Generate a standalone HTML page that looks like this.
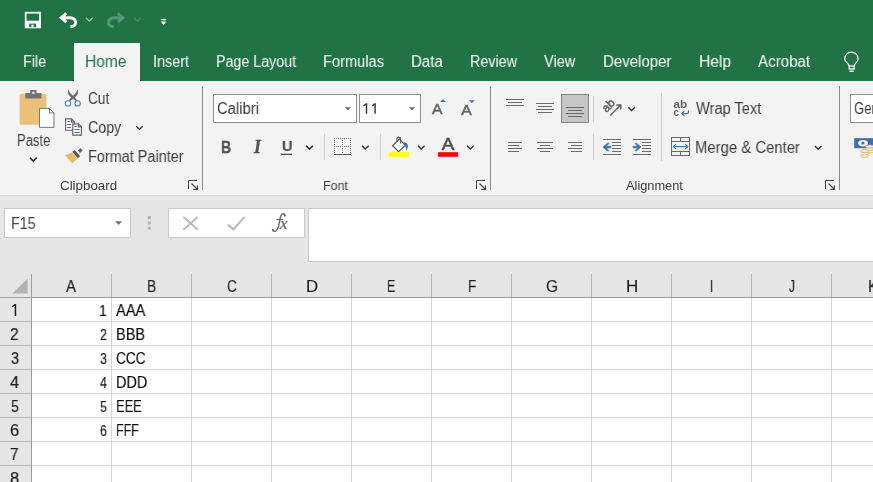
<!DOCTYPE html>
<html><head><meta charset="utf-8"><title>Excel</title>
<style>
html,body{margin:0;padding:0;}
body{width:873px;height:482px;overflow:hidden;position:relative;background:#e6e6e6;font-family:"Liberation Sans",sans-serif;}
.t{position:absolute;white-space:nowrap;transform-origin:0 50%;will-change:transform;font-family:"Liberation Sans",sans-serif;}
.b{position:absolute;}
svg{position:absolute;overflow:visible;}
</style></head><body>
<div class="b" style="left:0px;top:0px;width:873px;height:81px;background:#217346;"></div>
<div class="b" style="left:74px;top:43px;width:66px;height:38px;background:#f3f3f3;"></div>
<div class="b" style="left:0px;top:81px;width:873px;height:114px;background:#f3f3f3;"></div>
<div class="b" style="left:0px;top:195px;width:873px;height:1px;background:#dbdbdb;"></div>
<div class="b" style="left:202px;top:86px;width:1px;height:104px;background:#8a8a8a;"></div>
<div class="b" style="left:490px;top:86px;width:1px;height:104px;background:#8a8a8a;"></div>
<div class="b" style="left:839px;top:86px;width:1px;height:104px;background:#8a8a8a;"></div>
<div class="b" style="left:324px;top:134px;width:1px;height:26px;background:#d0d0d0;"></div>
<div class="b" style="left:380px;top:134px;width:1px;height:26px;background:#d0d0d0;"></div>
<div class="b" style="left:593px;top:96px;width:1px;height:26px;background:#d0d0d0;"></div>
<div class="b" style="left:593px;top:134px;width:1px;height:26px;background:#d0d0d0;"></div>
<div class="b" style="left:661px;top:93px;width:1px;height:68px;background:#d0d0d0;"></div>
<div class="b" style="left:213px;top:94px;width:144px;height:29px;background:#fff;box-sizing:border-box;border:1px solid #8f8f8f;"></div>
<div class="b" style="left:359px;top:94px;width:62px;height:29px;background:#fff;box-sizing:border-box;border:1px solid #8f8f8f;"></div>
<div class="b" style="left:850px;top:94px;width:40px;height:29px;background:#fff;box-sizing:border-box;border:1px solid #8f8f8f;"></div>
<div class="b" style="left:561px;top:94px;width:28px;height:29px;background:#c6c6c6;box-sizing:border-box;border:1px solid #858585;"></div>
<div class="b" style="left:4px;top:208px;width:127px;height:30px;background:#fff;box-sizing:border-box;border:1px solid #c8c8c8;"></div>
<div class="b" style="left:168px;top:208px;width:137px;height:30px;background:#fff;box-sizing:border-box;border:1px solid #c8c8c8;"></div>
<div class="b" style="left:308px;top:208px;width:570px;height:54px;background:#fff;box-sizing:border-box;border:1px solid #c8c8c8;"></div>
<div class="b" style="left:32px;top:298px;width:841px;height:184px;background:#fff;"></div>
<div class="b" style="left:111px;top:298px;width:1px;height:184px;background:#d4d4d4;"></div>
<div class="b" style="left:191px;top:298px;width:1px;height:184px;background:#d4d4d4;"></div>
<div class="b" style="left:271px;top:298px;width:1px;height:184px;background:#d4d4d4;"></div>
<div class="b" style="left:351px;top:298px;width:1px;height:184px;background:#d4d4d4;"></div>
<div class="b" style="left:431px;top:298px;width:1px;height:184px;background:#d4d4d4;"></div>
<div class="b" style="left:511px;top:298px;width:1px;height:184px;background:#d4d4d4;"></div>
<div class="b" style="left:591px;top:298px;width:1px;height:184px;background:#d4d4d4;"></div>
<div class="b" style="left:671px;top:298px;width:1px;height:184px;background:#d4d4d4;"></div>
<div class="b" style="left:751px;top:298px;width:1px;height:184px;background:#d4d4d4;"></div>
<div class="b" style="left:831px;top:298px;width:1px;height:184px;background:#d4d4d4;"></div>
<div class="b" style="left:32px;top:321px;width:841px;height:1px;background:#d4d4d4;"></div>
<div class="b" style="left:32px;top:345px;width:841px;height:1px;background:#d4d4d4;"></div>
<div class="b" style="left:32px;top:369px;width:841px;height:1px;background:#d4d4d4;"></div>
<div class="b" style="left:32px;top:393px;width:841px;height:1px;background:#d4d4d4;"></div>
<div class="b" style="left:32px;top:417px;width:841px;height:1px;background:#d4d4d4;"></div>
<div class="b" style="left:32px;top:441px;width:841px;height:1px;background:#d4d4d4;"></div>
<div class="b" style="left:32px;top:465px;width:841px;height:1px;background:#d4d4d4;"></div>
<div class="b" style="left:0px;top:297px;width:873px;height:1px;background:#9c9c9c;"></div>
<div class="b" style="left:31px;top:274px;width:1px;height:208px;background:#9c9c9c;"></div>
<div class="b" style="left:111px;top:274px;width:1px;height:23px;background:#b5b5b5;"></div>
<div class="b" style="left:191px;top:274px;width:1px;height:23px;background:#b5b5b5;"></div>
<div class="b" style="left:271px;top:274px;width:1px;height:23px;background:#b5b5b5;"></div>
<div class="b" style="left:351px;top:274px;width:1px;height:23px;background:#b5b5b5;"></div>
<div class="b" style="left:431px;top:274px;width:1px;height:23px;background:#b5b5b5;"></div>
<div class="b" style="left:511px;top:274px;width:1px;height:23px;background:#b5b5b5;"></div>
<div class="b" style="left:591px;top:274px;width:1px;height:23px;background:#b5b5b5;"></div>
<div class="b" style="left:671px;top:274px;width:1px;height:23px;background:#b5b5b5;"></div>
<div class="b" style="left:751px;top:274px;width:1px;height:23px;background:#b5b5b5;"></div>
<div class="b" style="left:831px;top:274px;width:1px;height:23px;background:#b5b5b5;"></div>
<div class="b" style="left:0px;top:321px;width:31px;height:1px;background:#bababa;"></div>
<div class="b" style="left:0px;top:345px;width:31px;height:1px;background:#bababa;"></div>
<div class="b" style="left:0px;top:369px;width:31px;height:1px;background:#bababa;"></div>
<div class="b" style="left:0px;top:393px;width:31px;height:1px;background:#bababa;"></div>
<div class="b" style="left:0px;top:417px;width:31px;height:1px;background:#bababa;"></div>
<div class="b" style="left:0px;top:441px;width:31px;height:1px;background:#bababa;"></div>
<div class="b" style="left:0px;top:465px;width:31px;height:1px;background:#bababa;"></div>
<svg width="873" height="482" viewBox="0 0 873 482" style="left:0;top:0;will-change:transform">
<!-- QAT: save -->
<g id="save">
<rect x="25.7" y="12.7" width="14.3" height="14.6" fill="none" stroke="#fff" stroke-width="1.8"/>
<rect x="25" y="20.7" width="15.8" height="7.4" fill="#fff"/>
<rect x="29.2" y="23.6" width="6.9" height="3.6" fill="#217346"/>
<rect x="31.4" y="24.6" width="2.2" height="2.6" fill="#fff"/>
</g>
<!-- undo -->
<g id="undo" fill="none" stroke="#fff" stroke-width="2.9" stroke-linejoin="miter">
<path d="M66.4 13.4 L61.2 17.8 L66.4 22.2" />
<path d="M62 17.8 H69.8 C77.6 17.8 77.4 26.6 70.4 26.8"/>
</g>
<path d="M86 17.9 L89.3 21.2 L92.6 17.9" fill="none" stroke="#a9cdb9" stroke-width="1.2"/>
<!-- redo (disabled) -->
<g id="redo" fill="none" stroke="#4f9a73" stroke-width="2.9">
<path d="M117.8 13.4 L123 17.8 L117.8 22.2"/>
<path d="M122.2 17.8 H114.4 C106.6 17.8 106.8 26.6 113.8 26.8"/>
</g>
<path d="M134.1 17.9 L137.4 21.2 L140.7 17.9" fill="none" stroke="#4c9470" stroke-width="1.2"/>
<!-- customize -->
<rect x="161" y="18.9" width="5.2" height="1.3" fill="#fff"/>
<path d="M160.8 21.5 H166.4 L163.6 25 Z" fill="#fff"/>
<!-- lightbulb -->
<g fill="none" stroke="#fff" stroke-width="1.3">
<path d="M849.2 66 C849.2 63.2 844.7 62.4 844.7 58.9 A6.7 6.7 0 1 1 858.1 58.9 C858.1 62.4 854.2 63.2 854.2 66"/>
<rect x="849.2" y="66" width="5" height="3" />
<path d="M849.5 71.2 H853.7"/>
</g>

<!-- Paste -->
<g id="paste">
<rect x="19.7" y="93.7" width="26.7" height="31" rx="1.5" fill="#e9c17a"/>
<path d="M30.2 90 H36.5 V93 H41.4 V98.6 H25.3 V93 H30.2 Z" fill="#737373"/>
<rect x="32.3" y="91.7" width="2.2" height="2.2" fill="#e6e6e6"/>
<path d="M39.5 108.4 H49.5 L54 112.9 V127.4 H39.5 Z" fill="#fff" stroke="#777" stroke-width="1"/>
<path d="M49.5 108.4 V112.9 H54" fill="none" stroke="#777" stroke-width="1"/>
</g>
<path d="M29.9 157.6 L33.3 161 L36.7 157.6" fill="none" stroke="#2b2b2b" stroke-width="1.6"/>

<!-- scissors -->
<g id="cut">
<path d="M67.8 88.9 L70.1 92.7 Q71.7 94.9 74 96.4 L77.1 100.3 L76.2 101.3 L72 98.3 Q69.2 96 68.3 94 Z" fill="#6a6a6a"/>
<path d="M78.2 88.9 L75.9 92.7 Q74.3 94.9 72 96.4 L68.9 100.3 L69.8 101.3 L74 98.3 Q76.8 96 77.7 94 Z" fill="#6a6a6a"/>
<circle cx="68" cy="103.4" r="2.65" fill="#f8fbff" stroke="#4a80c4" stroke-width="1.05"/>
<circle cx="77.6" cy="103.4" r="2.65" fill="#f8fbff" stroke="#4a80c4" stroke-width="1.05"/>
</g>

<!-- copy -->
<g id="copy" fill="#fdfdfd" stroke="#616161" stroke-width="1.15">
<path d="M65.6 118.9 H71.4 L74.4 121.9 V130.2 H65.6 Z"/>
<path d="M71.4 118.9 V121.9 H74.4" fill="none"/>
<path d="M72.8 123.8 H78.4 L81.4 126.8 V135.1 H72.8 Z"/>
<path d="M78.4 123.8 V126.8 H81.4" fill="none"/>
<g stroke="#46688c" stroke-width="1">
<path d="M67.2 121.5 H69.9 M67.2 124.5 H70.9 M67.2 127.5 H70.9"/>
<path d="M74.4 126.5 H76.8 M74.4 129.5 H79.7 M74.4 132.5 H79.7"/>
</g>
</g>
<path d="M136.3 126.3 L139.5 129.4 L142.7 126.3" fill="none" stroke="#333" stroke-width="1.4"/>

<!-- format painter -->
<g id="fp">
<path d="M65.2 155.2 L72.2 152.6 L77.6 158.6 L72.2 163.5 Z" fill="#eabc68"/>
<path d="M72.2 151.8 L74.8 150.1 L80.1 156.2 L77.9 158.2 Z" fill="#595959"/>
<path d="M77.9 150.6 L80.5 148.2 L82.6 150.4 L80 153 Z" fill="#595959"/>
</g>

<!-- dropdown arrows in combo -->
<path d="M344.8 107.2 H351 L347.9 110.3 Z" fill="#666"/>
<path d="M408.8 107.2 H415.2 L412 110.3 Z" fill="#666"/>

<!-- custom digit 1 glyphs (no foot) -->
<path d="M363.3 105.3 L365.9 103.2 H367.2 V113.8 H365.8 V104.9 L363.8 106.4 Z" fill="#333"/>
<path d="M371.8 105.3 L374.4 103.2 H375.8 V113.8 H374.4 V104.9 L372.3 106.4 Z" fill="#333"/>
<!-- grow/shrink font -->
<text x="432" y="114.1" font-family="Liberation Sans" font-size="14.6" fill="#666" stroke="#666" stroke-width="0.5" textLength="10.4" lengthAdjust="spacingAndGlyphs">A</text>
<path d="M440 102 L443 99.2 L446 102 Z" fill="#4074ae"/>
<text x="461.3" y="114.8" font-family="Liberation Sans" font-size="13.8" fill="#666" stroke="#666" stroke-width="0.5" textLength="10.4" lengthAdjust="spacingAndGlyphs">A</text>
<path d="M468.9 100.2 H474.9 L471.9 103 Z" fill="#4074ae"/>

<!-- U underline -->
<rect x="281" y="153.7" width="11.1" height="1.3" fill="#505050"/>
<path d="M306.1 145.8 L309.45 149.2 L312.8 145.8" fill="none" stroke="#2b2b2b" stroke-width="1.6"/>

<!-- borders -->
<rect x="334" y="138" width="17" height="16" fill="#fdfdfd"/>
<path d="M334 138h1v1h-1zM334 140h1v1h-1zM334 142h1v1h-1zM334 144h1v1h-1zM334 146h1v1h-1zM334 148h1v1h-1zM334 150h1v1h-1zM334 152h1v1h-1zM336 138h1v1h-1zM336 146h1v1h-1zM338 138h1v1h-1zM338 146h1v1h-1zM340 138h1v1h-1zM340 146h1v1h-1zM342 138h1v1h-1zM342 140h1v1h-1zM342 142h1v1h-1zM342 144h1v1h-1zM342 146h1v1h-1zM342 148h1v1h-1zM342 150h1v1h-1zM342 152h1v1h-1zM344 138h1v1h-1zM344 146h1v1h-1zM346 138h1v1h-1zM346 146h1v1h-1zM348 138h1v1h-1zM348 146h1v1h-1zM350 138h1v1h-1zM350 140h1v1h-1zM350 142h1v1h-1zM350 144h1v1h-1zM350 146h1v1h-1zM350 148h1v1h-1zM350 150h1v1h-1zM350 152h1v1h-1z" fill="#6b6b6b"/>
<rect x="334" y="154" width="17" height="1" fill="#5a5a5a"/>
<path d="M362 145.7 L365.3 149 L368.6 145.7" fill="none" stroke="#333" stroke-width="1.4"/>

<!-- fill bucket -->
<g id="bucket">
<path d="M392.6 145.8 L399.4 139.2 L405.2 145.4 L398.6 151.6 Z" fill="#fdfdfd" stroke="#5a5a5a" stroke-width="1.2"/>
<path d="M396.8 141.4 V139 A1.9 1.9 0 0 1 400.6 139 V143.4" fill="none" stroke="#5a5a5a" stroke-width="1.1"/>
<path d="M403.6 142.2 C406.6 142.2 408.2 144.4 407.9 146.6 C407.7 148.4 407 149.8 406.2 151 C406.4 148.6 406 146.6 404.4 145.2 Z" fill="#3d6fa8"/>
</g>
<rect x="388.7" y="152.2" width="20.4" height="4.6" fill="#ffff00"/>
<path d="M417.9 145.7 L421.2 149 L424.5 145.7" fill="none" stroke="#333" stroke-width="1.4"/>

<!-- font color -->
<text x="441.7" y="150" font-family="Liberation Sans" font-size="16.8" fill="#4d4d4d" stroke="#4d4d4d" stroke-width="0.6" textLength="12.5" lengthAdjust="spacingAndGlyphs">A</text>
<rect x="438" y="152.2" width="20" height="4.6" fill="#ff0000"/>
<path d="M467 145.7 L470.3 149 L473.6 145.7" fill="none" stroke="#333" stroke-width="1.4"/>

<!-- dialog launchers -->
<g id="dl1" fill="none" stroke="#444" stroke-width="1">
<path d="M188.5 189 V180.5 H197"/>
<path d="M191.5 183.5 L197.2 189.2" stroke-width="1.2"/>
<path d="M193.4 189.4 H197.4 V185.4" stroke-width="1.2"/>
</g>
<g fill="none" stroke="#444" stroke-width="1" transform="translate(288 0)">
<path d="M188.5 189 V180.5 H197"/>
<path d="M191.5 183.5 L197.2 189.2" stroke-width="1.2"/>
<path d="M193.4 189.4 H197.4 V185.4" stroke-width="1.2"/>
</g>
<g fill="none" stroke="#444" stroke-width="1" transform="translate(637 0)">
<path d="M188.5 189 V180.5 H197"/>
<path d="M191.5 183.5 L197.2 189.2" stroke-width="1.2"/>
<path d="M193.4 189.4 H197.4 V185.4" stroke-width="1.2"/>
</g>

<!-- alignment lines -->
<g fill="#6a6a6a">
<rect x="506" y="99" width="18" height="1"/><rect x="508" y="102" width="14" height="1"/><rect x="506" y="105" width="18" height="1"/>
<rect x="536" y="103" width="18" height="1"/><rect x="538" y="106" width="14" height="1"/><rect x="536" y="109" width="18" height="1"/><rect x="538" y="112" width="14" height="1"/>
<rect x="566" y="107" width="18" height="1"/><rect x="568" y="110" width="14" height="1"/><rect x="566" y="113" width="18" height="1"/><rect x="568" y="116" width="14" height="1"/>
<rect x="508" y="142" width="14" height="1"/><rect x="508" y="145" width="11" height="1"/><rect x="508" y="148" width="14" height="1"/><rect x="508" y="151" width="11" height="1"/>
<rect x="537" y="142" width="16" height="1"/><rect x="540" y="145" width="10" height="1"/><rect x="537" y="148" width="16" height="1"/><rect x="540" y="151" width="10" height="1"/>
<rect x="568" y="142" width="14" height="1"/><rect x="571" y="145" width="11" height="1"/><rect x="568" y="148" width="14" height="1"/><rect x="571" y="151" width="11" height="1"/>
</g>

<!-- orientation -->
<g id="orient">
<text transform="translate(606.4 112.9) rotate(-45)" font-family="Liberation Sans" font-size="12" fill="#5e5e5e" stroke="#5e5e5e" stroke-width="0.45">ab</text>
<path d="M610.2 115.4 L620.5 105.2" stroke="#5e5e5e" stroke-width="1.4" fill="none"/>
<path d="M616.4 105 H620.8 V109.6" stroke="#5e5e5e" stroke-width="1.4" fill="none"/>
</g>
<path d="M628.3 107.2 L631.6 110.4 L634.9 107.2" fill="none" stroke="#333" stroke-width="1.4"/>

<!-- wrap text icon -->
<g id="wrap">
<text x="673.6" y="107.8" font-family="Liberation Sans" font-weight="bold" font-size="11" fill="#5f5f5f" textLength="13.6" lengthAdjust="spacingAndGlyphs">ab</text>
<text x="673.6" y="116.2" font-family="Liberation Sans" font-weight="bold" font-size="11" fill="#5f5f5f" textLength="5.4" lengthAdjust="spacingAndGlyphs">c</text>
<path d="M688.4 110.2 V112 C688.4 113.4 687.6 113.6 686.6 113.6 H682" fill="none" stroke="#4074ae" stroke-width="1.2"/>
<path d="M684.4 111.2 L681.8 113.6 L684.4 116" fill="none" stroke="#4074ae" stroke-width="1.2"/>
</g>

<!-- indent icons -->
<g fill="#6a6a6a">
<rect x="603" y="139" width="18" height="1"/><rect x="612" y="142" width="9" height="1"/><rect x="612" y="145" width="9" height="1"/><rect x="612" y="148" width="9" height="1"/><rect x="612" y="151" width="9" height="1"/><rect x="603" y="154" width="18" height="1"/>
<rect x="633" y="139" width="18" height="1"/><rect x="642" y="142" width="9" height="1"/><rect x="642" y="145" width="9" height="1"/><rect x="642" y="148" width="9" height="1"/><rect x="642" y="151" width="9" height="1"/><rect x="633" y="154" width="18" height="1"/>
</g>
<path d="M603 147 L607.4 143.2 H609.2 L606.4 146.2 H611 V147.9 H606.4 L609.2 150.9 H607.4 Z" fill="#4074ae" stroke="#4074ae" stroke-width="0.6"/>
<path d="M641 147 L636.6 143.2 H634.8 L637.6 146.2 H633 V147.9 H637.6 L634.8 150.9 H636.6 Z" fill="#4074ae" stroke="#4074ae" stroke-width="0.6"/>

<!-- merge icon -->
<g fill="none" stroke="#6a6a6a" stroke-width="1">
<rect x="671.5" y="137.5" width="18" height="18"/>
<path d="M671.5 141.5 H689.5 M671.5 151.5 H689.5 M680.5 137.5 V141.5 M680.5 151.5 V155.5"/>
</g>
<g fill="none" stroke="#4074ae" stroke-width="1.1">
<path d="M673.6 146.6 H687.6"/>
<path d="M676 144.2 L673.4 146.6 L676 149"/>
<path d="M685.2 144.2 L687.8 146.6 L685.2 149"/>
</g>
<path d="M814.9 146 L818.2 149.2 L821.5 146" fill="none" stroke="#333" stroke-width="1.4"/>

<!-- currency icon -->
<g id="curr">
<rect x="854.2" y="138.2" width="22" height="10" fill="#3b6fb0"/>
<ellipse cx="863" cy="143.2" rx="5" ry="3.3" fill="#f3f3f3"/>
<circle cx="863" cy="143.2" r="1.4" fill="#3b6fb0"/>
<g fill="#f3f3f3" stroke="#e3b05e" stroke-width="0.9">
<ellipse cx="869.6" cy="151.4" rx="4" ry="1.5"/>
<ellipse cx="869.6" cy="149" rx="4" ry="1.5"/>
<ellipse cx="869.6" cy="146.6" rx="4" ry="1.5"/>
<ellipse cx="864.6" cy="155.8" rx="4" ry="1.5"/>
<ellipse cx="864.6" cy="153.4" rx="4" ry="1.5"/>
<ellipse cx="864.6" cy="151" rx="4" ry="1.5"/>
</g>
</g>

<!-- name box arrow -->
<path d="M115 221.3 H122.2 L118.6 224.9 Z" fill="#777"/>
<!-- dots -->
<g fill="#b3b3b3">
<rect x="147.8" y="216" width="3" height="3"/><rect x="147.8" y="221.4" width="3" height="3"/><rect x="147.8" y="226.6" width="3" height="3"/>
</g>
<!-- X -->
<path d="M183.4 217 L197.8 229.8 M197.8 217 L183.4 229.8" stroke="#bababa" stroke-width="1.9" fill="none"/>
<!-- check -->
<path d="M228 224.6 L233.4 229.4 L244.4 217" stroke="#bdbdbd" stroke-width="2.2" fill="none"/>
<!-- fx -->
<g id="fx" fill="#6a6a6a" stroke="#6a6a6a" stroke-width="0.25">
<path d="M284.9 215.6 C284.7 213.5 282.3 213 281.2 215 C280.2 217 279.7 221 278.7 225.4 C277.9 229 276.8 231.4 274.8 231.2 C273.6 231.1 272.8 230.5 272.7 229.8" fill="none" stroke-width="1.5" stroke-linecap="round"/>
<circle cx="284.6" cy="215.5" r="0.9"/><circle cx="272.9" cy="230" r="0.9"/>
<path d="M276.4 219.5 H283.2" fill="none" stroke-width="1.2"/>
<text transform="translate(279.7 228.9) scale(1.12 1)" style="font-family:'Liberation Serif',serif;font-style:italic;font-size:16px">x</text>
</g>

<!-- row header 1 (no foot) -->
<path d="M11.7 306.3 L14.8 304 H16.2 V316 H14.7 V305.8 L12.3 307.5 Z" fill="#1e1e1e"/>
<!-- corner triangle -->
<path d="M27.7 278.4 V293.6 H12.2 Z" fill="#b4b4b4"/>
</svg>

<span class="t" style="left:22.50px;top:51px;font-size:16px;line-height:21px;color:#ffffff;transform-origin:0 16px;transform:scale(0.8962,1);">File</span>
<span class="t" style="left:153.40px;top:51px;font-size:16px;line-height:21px;color:#ffffff;transform-origin:0 16px;transform:scale(0.9022,1);">Insert</span>
<span class="t" style="left:216.31px;top:51px;font-size:16px;line-height:21px;color:#ffffff;transform-origin:0 16px;transform:scale(0.8914,1);">Page Layout</span>
<span class="t" style="left:323.18px;top:51px;font-size:16px;line-height:21px;color:#ffffff;transform-origin:0 16px;transform:scale(0.9150,1);">Formulas</span>
<span class="t" style="left:410.76px;top:51px;font-size:16px;line-height:21px;color:#ffffff;transform-origin:0 16px;transform:scale(0.9393,1);">Data</span>
<span class="t" style="left:469.91px;top:51px;font-size:16px;line-height:21px;color:#ffffff;transform-origin:0 16px;transform:scale(0.8939,1);">Review</span>
<span class="t" style="left:544.30px;top:51px;font-size:16px;line-height:21px;color:#ffffff;transform-origin:0 16px;transform:scale(0.9100,1);">View</span>
<span class="t" style="left:602.96px;top:51px;font-size:16px;line-height:21px;color:#ffffff;transform-origin:0 16px;transform:scale(0.9380,1);">Developer</span>
<span class="t" style="left:698.53px;top:51px;font-size:16px;line-height:21px;color:#ffffff;transform-origin:0 16px;transform:scale(0.9748,1);">Help</span>
<span class="t" style="left:758.20px;top:51px;font-size:16px;line-height:21px;color:#ffffff;transform-origin:0 16px;transform:scale(0.9444,1);">Acrobat</span>
<span class="t" style="left:85.33px;top:51px;font-size:16px;line-height:21px;color:#217346;transform-origin:0 16px;transform:scale(0.9693,1);">Home</span>
<span class="t" style="left:88.30px;top:88px;font-size:16px;line-height:21px;color:#3d3d3d;transform-origin:0 16px;transform:scale(0.8525,1);">Cut</span>
<span class="t" style="left:88.30px;top:117px;font-size:16px;line-height:21px;color:#3d3d3d;transform-origin:0 16px;transform:scale(0.8889,1);">Copy</span>
<span class="t" style="left:87.80px;top:146px;font-size:16px;line-height:21px;color:#3d3d3d;transform-origin:0 16px;transform:scale(0.9035,1);">Format Painter</span>
<span class="t" style="left:16.99px;top:130px;font-size:16px;line-height:21px;color:#3d3d3d;transform-origin:0 16px;transform:scale(0.8147,1);">Paste</span>
<span class="t" style="left:60.45px;top:177px;font-size:12.8px;line-height:17px;color:#3d3d3d;transform-origin:0 13px;transform:scale(1.0419,1);">Clipboard</span>
<span class="t" style="left:322.53px;top:177px;font-size:12.8px;line-height:17px;color:#3d3d3d;transform-origin:0 13px;transform:scale(0.9740,1);">Font</span>
<span class="t" style="left:625.70px;top:177px;font-size:12.8px;line-height:17px;color:#3d3d3d;transform-origin:0 13px;transform:scale(0.9991,1);">Alignment</span>
<span class="t" style="left:216.60px;top:98px;font-size:16px;line-height:21px;color:#333;transform-origin:0 16px;transform:scale(0.9266,1);">Calibri</span>
<span class="t" style="left:695.60px;top:98px;font-size:16px;line-height:21px;color:#3d3d3d;transform-origin:0 16px;transform:scale(0.9145,1);">Wrap Text</span>
<span class="t" style="left:694.97px;top:137px;font-size:16px;line-height:21px;color:#3d3d3d;transform-origin:0 16px;transform:scale(0.9298,1);">Merge &amp; Center</span>
<span class="t" style="left:853.70px;top:98px;font-size:16px;line-height:21px;color:#333;transform-origin:0 16px;transform:scale(0.8200,1);">Ger</span>
<span class="t" style="left:11.09px;top:214px;font-size:15.6px;line-height:20px;color:#444;transform-origin:0 15px;transform:scale(0.9123,1);">F15</span>
<span class="t" style="left:220.97px;top:137px;font-size:17px;line-height:22px;color:#505050;transform-origin:0 16px;transform:scale(0.8273,1);font-weight:bold;-webkit-text-stroke:0.35px #505050;">B</span>
<span class="t" style="left:253.98px;top:136px;font-size:18px;line-height:23px;color:#505050;transform-origin:0 17px;transform:scale(0.9778,1);font-style:italic;font-family:'Liberation Serif',serif;font-weight:bold;-webkit-text-stroke:0.3px #505050;">I</span>
<span class="t" style="left:281.70px;top:136px;font-size:15px;line-height:20px;color:#505050;transform-origin:0 15px;transform:scale(0.9700,1);font-weight:bold;-webkit-text-stroke:0.2px #505050;">U</span>
<span class="t" style="left:66.20px;top:276px;font-size:16.8px;line-height:22px;color:#1e1e1e;transform-origin:0 16px;transform:scale(0.8833,1);-webkit-text-stroke:0.2px #1e1e1e;">A</span>
<span class="t" style="left:147.48px;top:276px;font-size:16.8px;line-height:22px;color:#1e1e1e;transform-origin:0 16px;transform:scale(0.8200,1);-webkit-text-stroke:0.2px #1e1e1e;">B</span>
<span class="t" style="left:226.70px;top:276px;font-size:16.8px;line-height:22px;color:#1e1e1e;transform-origin:0 16px;transform:scale(0.8083,1);-webkit-text-stroke:0.2px #1e1e1e;">C</span>
<span class="t" style="left:305.84px;top:276px;font-size:16.8px;line-height:22px;color:#1e1e1e;transform-origin:0 16px;transform:scale(0.9636,1);-webkit-text-stroke:0.2px #1e1e1e;">D</span>
<span class="t" style="left:387.46px;top:276px;font-size:16.8px;line-height:22px;color:#1e1e1e;transform-origin:0 16px;transform:scale(0.7400,1);-webkit-text-stroke:0.2px #1e1e1e;">E</span>
<span class="t" style="left:467.89px;top:276px;font-size:16.8px;line-height:22px;color:#1e1e1e;transform-origin:0 16px;transform:scale(0.8111,1);-webkit-text-stroke:0.2px #1e1e1e;">F</span>
<span class="t" style="left:546.40px;top:276px;font-size:16.8px;line-height:22px;color:#1e1e1e;transform-origin:0 16px;transform:scale(0.9250,1);-webkit-text-stroke:0.2px #1e1e1e;">G</span>
<span class="t" style="left:625.79px;top:276px;font-size:16.8px;line-height:22px;color:#1e1e1e;transform-origin:0 16px;transform:scale(1.0100,1);-webkit-text-stroke:0.2px #1e1e1e;">H</span>
<span class="t" style="left:709.93px;top:276px;font-size:16.8px;line-height:22px;color:#1e1e1e;transform-origin:0 16px;transform:scale(0.6667,1);-webkit-text-stroke:0.2px #1e1e1e;">I</span>
<span class="t" style="left:788.70px;top:276px;font-size:16.8px;line-height:22px;color:#1e1e1e;transform-origin:0 16px;transform:scale(0.7125,1);-webkit-text-stroke:0.2px #1e1e1e;">J</span>
<span class="t" style="left:867.90px;top:276px;font-size:16.8px;line-height:22px;color:#1e1e1e;transform-origin:0 16px;transform:scale(0.9000,1);-webkit-text-stroke:0.2px #1e1e1e;">K</span>
<span class="t" style="left:10.40px;top:324px;font-size:16.8px;line-height:22px;color:#1e1e1e;transform-origin:0 16px;transform:scale(0.9222,1);-webkit-text-stroke:0.2px #1e1e1e;">2</span>
<span class="t" style="left:10.70px;top:348px;font-size:16.8px;line-height:22px;color:#1e1e1e;transform-origin:0 16px;transform:scale(0.8556,1);-webkit-text-stroke:0.2px #1e1e1e;">3</span>
<span class="t" style="left:10.00px;top:372px;font-size:16.8px;line-height:22px;color:#1e1e1e;transform-origin:0 16px;transform:scale(0.9667,1);-webkit-text-stroke:0.2px #1e1e1e;">4</span>
<span class="t" style="left:10.60px;top:396px;font-size:16.8px;line-height:22px;color:#1e1e1e;transform-origin:0 16px;transform:scale(0.8333,1);-webkit-text-stroke:0.2px #1e1e1e;">5</span>
<span class="t" style="left:10.10px;top:420px;font-size:16.8px;line-height:22px;color:#1e1e1e;transform-origin:0 16px;transform:scale(0.9778,1);-webkit-text-stroke:0.2px #1e1e1e;">6</span>
<span class="t" style="left:10.10px;top:444px;font-size:16.8px;line-height:22px;color:#1e1e1e;transform-origin:0 16px;transform:scale(0.9222,1);-webkit-text-stroke:0.2px #1e1e1e;">7</span>
<span class="t" style="left:10.10px;top:468px;font-size:16.8px;line-height:22px;color:#1e1e1e;transform-origin:0 16px;transform:scale(0.9778,1);-webkit-text-stroke:0.2px #1e1e1e;">8</span>
<span class="t" style="left:99.22px;top:300px;font-size:16px;line-height:21px;color:#0a0a0a;transform-origin:0 16px;transform:scale(0.8750,0.92);-webkit-text-stroke:0.15px #0a0a0a;">1</span>
<span class="t" style="left:115.60px;top:300px;font-size:16px;line-height:21px;color:#0a0a0a;transform-origin:0 16px;transform:scale(0.9183,1);-webkit-text-stroke:0.15px #0a0a0a;">AAA</span>
<span class="t" style="left:100.10px;top:324px;font-size:16px;line-height:21px;color:#0a0a0a;transform-origin:0 16px;transform:scale(0.7778,0.92);-webkit-text-stroke:0.15px #0a0a0a;">2</span>
<span class="t" style="left:115.79px;top:324px;font-size:16px;line-height:21px;color:#0a0a0a;transform-origin:0 16px;transform:scale(0.9096,1);-webkit-text-stroke:0.15px #0a0a0a;">BBB</span>
<span class="t" style="left:100.10px;top:348px;font-size:16px;line-height:21px;color:#0a0a0a;transform-origin:0 16px;transform:scale(0.7778,0.92);-webkit-text-stroke:0.15px #0a0a0a;">3</span>
<span class="t" style="left:116.00px;top:348px;font-size:16px;line-height:21px;color:#0a0a0a;transform-origin:0 16px;transform:scale(0.8561,1);-webkit-text-stroke:0.15px #0a0a0a;">CCC</span>
<span class="t" style="left:100.10px;top:372px;font-size:16px;line-height:21px;color:#0a0a0a;transform-origin:0 16px;transform:scale(0.7778,0.92);-webkit-text-stroke:0.15px #0a0a0a;">4</span>
<span class="t" style="left:115.79px;top:372px;font-size:16px;line-height:21px;color:#0a0a0a;transform-origin:0 16px;transform:scale(0.9061,1);-webkit-text-stroke:0.15px #0a0a0a;">DDD</span>
<span class="t" style="left:100.10px;top:396px;font-size:16px;line-height:21px;color:#0a0a0a;transform-origin:0 16px;transform:scale(0.7778,0.92);-webkit-text-stroke:0.15px #0a0a0a;">5</span>
<span class="t" style="left:115.90px;top:396px;font-size:16px;line-height:21px;color:#0a0a0a;transform-origin:0 16px;transform:scale(0.8041,1);-webkit-text-stroke:0.15px #0a0a0a;">EEE</span>
<span class="t" style="left:100.10px;top:420px;font-size:16px;line-height:21px;color:#0a0a0a;transform-origin:0 16px;transform:scale(0.7778,0.92);-webkit-text-stroke:0.15px #0a0a0a;">6</span>
<span class="t" style="left:115.92px;top:420px;font-size:16px;line-height:21px;color:#0a0a0a;transform-origin:0 16px;transform:scale(0.7777,1);-webkit-text-stroke:0.15px #0a0a0a;">FFF</span>
</body></html>
